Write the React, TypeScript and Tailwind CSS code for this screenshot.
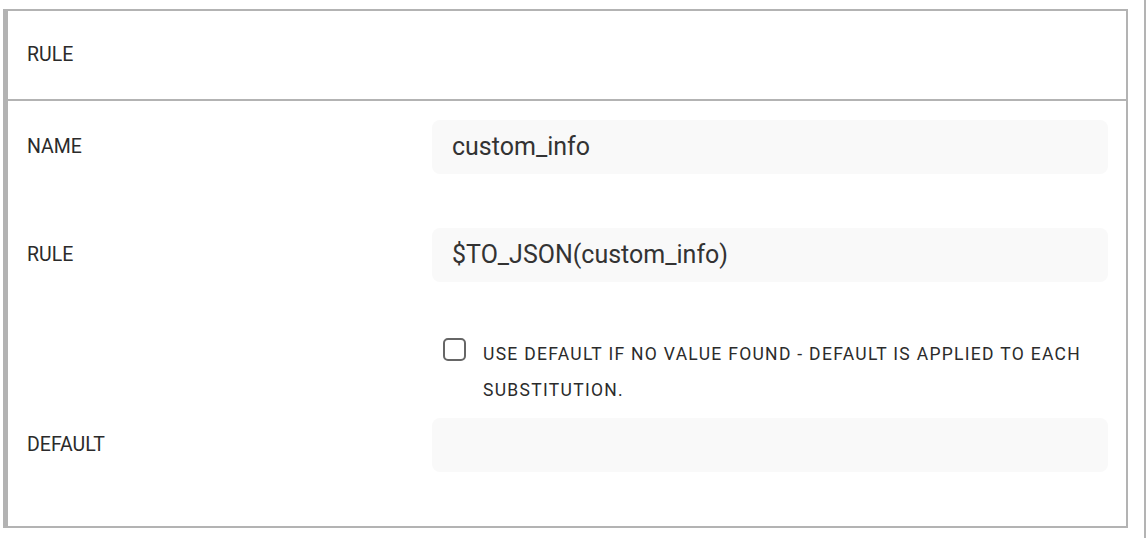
import { useState } from "react";

const FONT = "font-['Roboto','Liberation_Sans',sans-serif]";

function Field({ label, value }: { label: string; value: string }) {
  return (
    <div className="flex items-center">
      <div className="w-[405px] shrink-0 text-[19.5px] text-[#2b2b2b]">{label}</div>
      <div className="flex h-[54px] w-[676px] items-center rounded-lg bg-[#f9f9f9] px-5 text-[25px] text-[#333]">
        {value}
      </div>
    </div>
  );
}

export default function App() {
  const [useDefault, setUseDefault] = useState(false);

  return (
    <div className={`h-[538px] w-[1146px] overflow-hidden border-r-2 border-[#b3b3b3] bg-white ${FONT}`}>
      <div className="ml-[3px] mt-[9px] h-[519px] w-[1125px] border-2 border-l-[5px] border-[#b3b3b3]">
        <div className="flex h-[90px] items-center border-b-2 border-[#b3b3b3] pl-[19px] text-[19.5px] text-[#2b2b2b]">
          RULE
        </div>
        <div className="flex flex-col pl-[19px]">
          <div className="mt-[19px]">
            <Field label="NAME" value="custom_info" />
          </div>
          <div className="mt-[54px]">
            <Field label="RULE" value="$TO_JSON(custom_info)" />
          </div>
          <div className="mt-[54px] flex">
            <div className="w-[405px] shrink-0" />
            <label className="flex w-[676px] cursor-pointer items-start pl-[11px]">
              <input
                type="checkbox"
                checked={useDefault}
                onChange={(e) => setUseDefault(e.target.checked)}
                className="sr-only"
              />
              <span
                className={`mt-[2px] h-[23px] w-[23px] shrink-0 rounded-[5px] border-2 border-[#666] ${
                  useDefault ? "bg-[#666]" : "bg-white"
                }`}
              />
              <span className="ml-[17px] text-[17.5px] leading-[36px] tracking-[1.3px] text-[#2b2b2b]">
                USE DEFAULT IF NO VALUE FOUND - DEFAULT IS APPLIED TO EACH SUBSTITUTION.
              </span>
            </label>
          </div>
          <div className="mt-[10px]">
            <Field label="DEFAULT" value="" />
          </div>
        </div>
      </div>
    </div>
  );
}
